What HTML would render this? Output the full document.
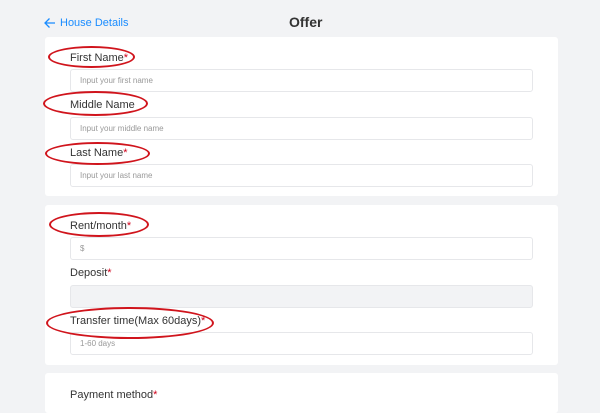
<!DOCTYPE html>
<html><head><style>
body{margin:0;width:600px;height:400px;background:#f2f3f5;font-family:"Liberation Sans",sans-serif;position:relative;overflow:hidden}
.a{position:absolute}
.card{position:absolute;left:45px;width:513px;background:#fff;border-radius:3px}
.lbl{position:absolute;left:70px;font-size:11px;color:#333;line-height:14px}
.lbl i{color:#d0021b;font-style:normal}
.inp{position:absolute;left:70px;width:461px;height:21px;border:1px solid #e6e7ea;border-radius:3px;background:#fff;font-size:8px;color:#999;line-height:21px;box-sizing:content-box;padding-left:9px;width:452px}
.el{position:absolute;border:2px solid #d0141c;border-radius:50%;box-sizing:border-box}
</style></head><body>
<svg class="a" style="left:43px;top:17px" width="13" height="12" viewBox="0 0 13 12"><path d="M12 6H2M6.5 1.5L2 6l4.5 4.5" fill="none" stroke="#1a8cff" stroke-width="1.3"/></svg>
<div class="a" style="left:60px;top:17px;font-size:11px;color:#1a8cff">House Details</div>
<div class="a" style="left:289px;top:14px;font-size:14px;font-weight:bold;color:#333">Offer</div>
<div class="card" style="top:37px;height:159px"></div>
<div class="card" style="top:205px;height:160px"></div>
<div class="card" style="top:373px;height:40px"></div>
<div class="lbl" style="top:51px">First Name<i>*</i></div>
<div class="inp" style="top:69px">Input your first name</div>
<div class="lbl" style="top:98px">Middle Name</div>
<div class="inp" style="top:117px">Input your middle name</div>
<div class="lbl" style="top:146px">Last Name<i>*</i></div>
<div class="inp" style="top:164px">Input your last name</div>
<div class="lbl" style="top:219px">Rent/month<i>*</i></div>
<div class="inp" style="top:237px">$</div>
<div class="lbl" style="top:266px">Deposit<i>*</i></div>
<div class="inp" style="top:285px;background:#f2f3f5"></div>
<div class="lbl" style="top:314px">Transfer time(Max 60days)<i>*</i></div>
<div class="inp" style="top:332px">1-60 days</div>
<div class="lbl" style="top:388px">Payment method<i>*</i></div>
<div class="el" style="left:48px;top:46px;width:87px;height:22px"></div>
<div class="el" style="left:43px;top:91px;width:105px;height:25px"></div>
<div class="el" style="left:45px;top:142px;width:105px;height:23px"></div>
<div class="el" style="left:49px;top:212px;width:100px;height:25px"></div>
<div class="el" style="left:46px;top:307px;width:168px;height:32px"></div>
</body></html>
